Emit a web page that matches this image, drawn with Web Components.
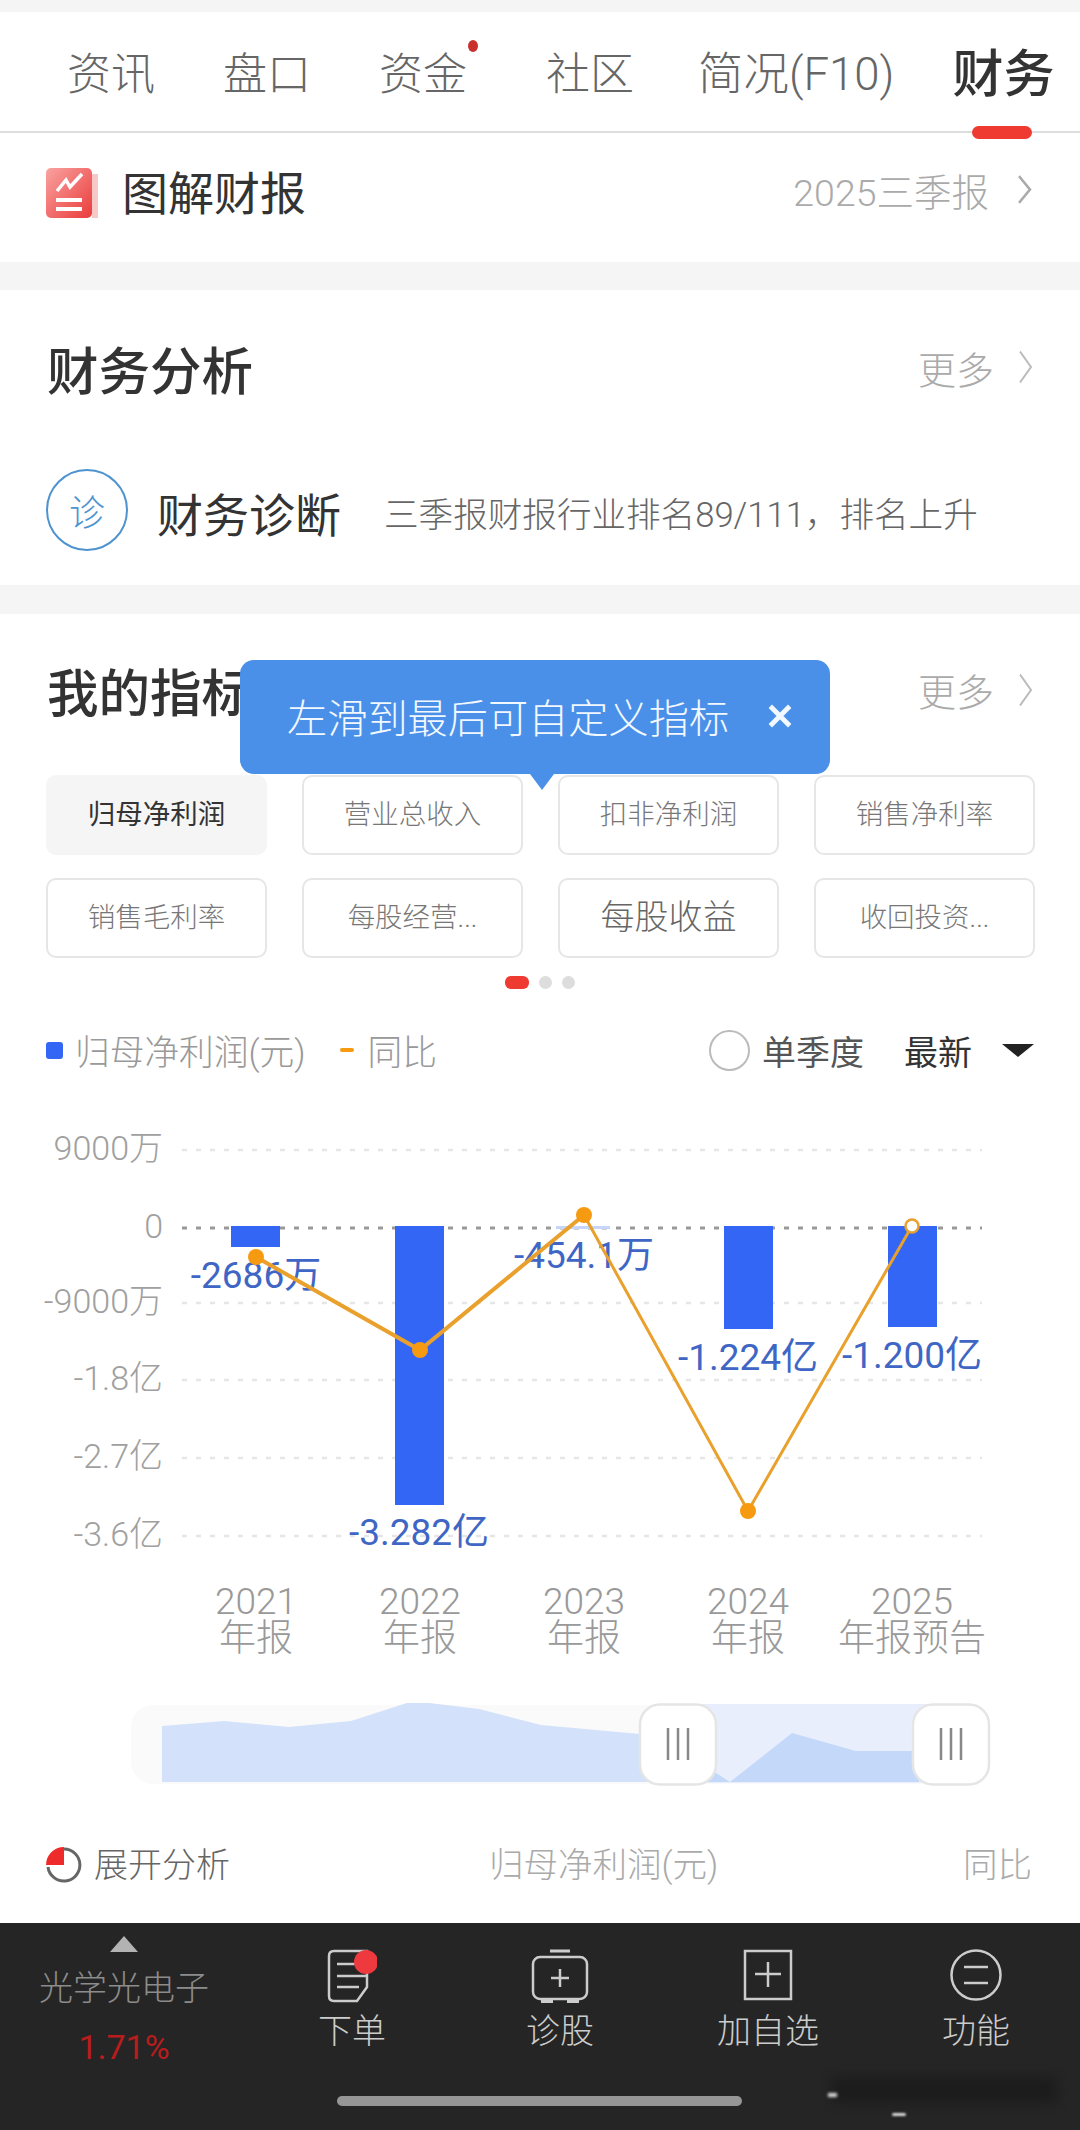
<!DOCTYPE html>
<html><head><meta charset="utf-8">
<style>
html,body{margin:0;padding:0;background:#f5f5f5;}
body{width:1080px;height:2130px;overflow:hidden;font-family:Roboto,"Noto Sans CJK SC",sans-serif;}
</style></head><body>
<stock-tabs></stock-tabs>
<report-row></report-row>
<analysis-card></analysis-card>
<metrics-card></metrics-card>
<dock-bar></dock-bar>
<script>
function def(name,html,after){
  customElements.define(name,class extends HTMLElement{
    constructor(){super();const r=this.attachShadow({mode:'open'});r.innerHTML=html;}
  });
}
const chev=(c,h=31,w=15,sw=2.4)=>`<svg width="${w}" height="${h}" viewBox="0 0 15 28" preserveAspectRatio="none" fill="none"><path d="M2 2 L13 14 L2 26" stroke="${c}" stroke-width="${sw}"/></svg>`;

def('tab-item',`<style>
:host{display:block;position:relative;font-size:44px;line-height:60px;color:#666;font-weight:300;white-space:nowrap}
:host([active]){font-size:51px;color:#333;font-weight:500}
:host([wide]){font-size:45.5px}
:host([dot])::after{content:"";position:absolute;right:-11px;top:-5px;width:10px;height:12px;border-radius:50%;background:#c9302c}
:host([active])::before{content:"";position:absolute;left:20px;top:81px;width:60px;height:13px;border-radius:7px;background:#ee3a30}
</style><slot></slot>`);

def('stock-tabs',`<style>
:host{display:flex;box-sizing:border-box;margin-top:12px;height:121px;padding:33px 0 0 67px;background:#fff;border-bottom:2px solid #ddd}
.a{margin-left:68px}.b{margin-left:68px}.c{margin-left:79px}.d{margin-left:64px}.e{margin-left:58px}
</style>
<tab-item>资讯</tab-item><tab-item class="a">盘口</tab-item><tab-item class="b" dot>资金</tab-item><tab-item class="c">社区</tab-item><tab-item class="d" wide>简况(F10)</tab-item><tab-item class="e" active>财务</tab-item>`);

def('report-row',`<style>
:host{display:flex;align-items:center;box-sizing:border-box;height:129px;padding:0 48px 16px 46px;background:#fff;margin-bottom:28px}
svg.i{margin-right:24px}
.t{font-size:46px;color:#333;font-weight:400;flex:1}
.r{font-size:37.5px;color:#aaa;font-weight:300;margin-right:28px}
</style>
<svg class="i" width="52" height="50" viewBox="0 0 52 50" style="margin-top:6px"><defs><linearGradient id="g" x1="0" y1="0" x2="1" y2="1"><stop offset="0" stop-color="#f9a3a0"/><stop offset="1" stop-color="#ea3b3b"/></linearGradient></defs><rect x="0" y="0" width="46" height="50" rx="5" fill="url(#g)"/><rect x="46" y="6" width="6" height="44" fill="#f6c9c6"/><path d="M11 23 L20 12 L24 19 L36 6" fill="none" stroke="#fff" stroke-width="3.5"/><path d="M10 32 H36 M10 41 H36" stroke="#fff" stroke-width="4"/></svg>
<span class="t">图解财报</span><span class="r">2025三季报</span>${chev('#aaa')}`);

def('analysis-card',`<style>
:host{display:block;box-sizing:border-box;height:295px;background:#fff;margin-bottom:29px;padding:0 47px}
.h{display:flex;align-items:center;height:160px;padding-bottom:6px;box-sizing:border-box}
.h b{flex:1;font-size:51.5px;font-weight:500;color:#333}
.h span{font-size:38px;color:#aaa;font-weight:300;margin-right:24px}
.d{display:flex;align-items:center;height:82px;margin-top:19px;margin-left:-1px}
.c{box-sizing:border-box;width:82px;height:82px;border:2.5px solid #4e93cf;border-radius:50%;color:#4e93cf;font-size:36px;font-weight:300;display:flex;align-items:center;justify-content:center;margin-right:29px}
.n{font-size:46px;color:#333;font-weight:400;margin-right:43px;position:relative;top:2px}
.s{font-size:34.6px;color:#666;font-weight:300;white-space:nowrap;position:relative;top:2px}
</style>
<div class="h"><b>财务分析</b><span>更多</span>${chev('#bbb',36,15,1.8)}</div>
<div class="d"><div class="c">诊</div><span class="n">财务诊断</span><span class="s">三季报财报行业排名89/111，排名上升</span></div>`);

def('metric-chip',`<style>
:host{display:flex;align-items:center;justify-content:center;box-sizing:border-box;height:80px;padding-bottom:7px;border:2.5px solid #e6e6e6;border-radius:10px;font-size:27.5px;color:#777;font-weight:300;white-space:nowrap}
:host([on]){background:#f5f5f5;border-color:#f5f5f5;color:#333;font-weight:400}
:host([big]){font-size:34px;color:#666}
</style><slot></slot>`);

def('tip-bubble',`<style>
:host{position:absolute;left:240px;top:46px;box-sizing:border-box;width:590px;height:114px;background:#4a90e8;border-radius:14px;display:flex;align-items:center;padding:0 0 4px 47px;color:#f2f8ff;font-size:40.2px;font-weight:300;white-space:nowrap}
:host::after{content:"";position:absolute;left:290px;top:114px;border:12px solid transparent;border-top:16px solid #4a90e8;border-bottom:0}
svg{margin-left:37px;margin-top:2px}
</style><span>左滑到最后可自定义指标</span><svg width="28" height="28" viewBox="0 0 26 26"><path d="M4 4 L22 22 M22 4 L4 22" stroke="#f2f8ff" stroke-width="4.5"/></svg>`);

const gy=[1150,1228,1303,1380,1458,1536], top0=1100;
const Y=v=>v-top0;
const bars=[[231,1226,49,21],[395,1226,49,279],[556,1226,54,3],[724,1226,49,103],[888,1226,49,101]];
const pts=[[256,1257],[420,1350],[584,1215],[748,1511],[912,1226]];
const lab=[[256,1288,'-2686万'],[419,1545,'-3.282亿'],[584,1268,'-454.1万'],[748,1370,'-1.224亿'],[912,1368,'-1.200亿']];
const yl=['9000万','0','-9000万','-1.8亿','-2.7亿','-3.6亿'];
const xl=['2021\n年报','2022\n年报','2023\n年报','2024\n年报','2025\n年报预告'];
let s=`<style>:host{display:block;margin-top:28px}svg{display:block}text{font-family:Roboto,"Noto Sans CJK SC",sans-serif}
.xl{font:300 37px/37px Roboto,"Noto Sans CJK SC",sans-serif;color:#999;text-align:center;white-space:pre-line}</style><svg width="1080" height="590" viewBox="0 0 1080 590">`;
gy.forEach((y,i)=>{
  s+=`<line x1="182" x2="982" y1="${Y(y)}" y2="${Y(y)}" stroke="${i==1?'#999':'#e6e6e6'}" stroke-width="${i==1?3:2.5}" stroke-dasharray="5 9"/>`;
  s+=`<text x="163" y="${Y(y)+10}" text-anchor="end" font-size="34" font-weight="300" fill="#a0a0a0">${yl[i]}</text>`;
});
bars.forEach((b,i)=>s+=`<rect x="${b[0]}" y="${Y(b[1])}" width="${b[2]}" height="${b[3]}" fill="${i==2?'#c6d6fb':'#3366f5'}"/>`);
lab.forEach(l=>s+=`<text x="${l[0]}" y="${Y(l[1])}" text-anchor="middle" font-size="37" font-weight="400" fill="#3f66c4">${l[2]}</text>`);
s+=`<polyline points="${pts.slice(0,3).map(p=>p[0]+','+Y(p[1])).join(' ')}" fill="none" stroke="#e9a02c" stroke-width="4"/>`;
s+=`<polyline points="${pts.slice(2).map(p=>p[0]+','+Y(p[1])).join(' ')}" fill="none" stroke="#e9a02c" stroke-width="3"/>`;
pts.forEach((p,i)=>s+= i<4?`<circle cx="${p[0]}" cy="${Y(p[1])}" r="8" fill="#f59a11"/>`:`<circle cx="${p[0]}" cy="${Y(p[1])}" r="6.5" fill="#fff" stroke="#e9a02c" stroke-width="2.5"/>`);
xl.forEach((t,i)=>{const x=pts[i][0];
 s+=`<foreignObject x="${x-100}" y="${Y(1583)}" width="200" height="80"><div xmlns="http://www.w3.org/1999/xhtml" class="xl">${t}</div></foreignObject>`;});
s+=`</svg>`;
def('fin-chart',s);

const hz=(x)=>Math.round(x/1.452), vz=(y)=>Math.round(y/3)-44;
const area=[[235,200],[325,187],[420,204],[510,187],[600,127],[695,150],[785,197],[930,225],[1035,335],[1060,368],[1150,222],[1243,275],[1335,275],[1335,368],[235,368]];
const ap=area.map(p=>hz(p[0])+','+vz(p[1])).join(' ');
const handle=(x)=>`<rect x="${x}" y="1.5" width="76" height="80" rx="20" fill="#fff" stroke="#e5e5e5" stroke-width="2.5"/><path d="M${x+28} 25 V57 M${x+38} 25 V57 M${x+48} 25 V57" stroke="#888" stroke-width="2.5"/>`;
def('mini-map',`<style>:host{display:block;height:84px;margin-top:13px}svg{display:block}</style>
<svg width="1080" height="84" viewBox="0 0 1080 84"><defs><clipPath id="l"><rect x="0" y="0" width="678" height="84"/></clipPath><clipPath id="r"><rect x="678" y="0" width="402" height="84"/></clipPath></defs>
<rect x="131" y="2" width="858" height="79" rx="22" fill="#fafafa"/>
<rect x="678" y="1" width="290" height="79" fill="#e8eefb"/>
<polygon points="${ap}" fill="#d3e2fa" clip-path="url(#l)"/><polygon points="${ap}" fill="#c4d8fa" clip-path="url(#r)"/>
${handle(640)}${handle(913)}</svg>`);

def('metrics-card',`<style>
:host{display:block;position:relative;box-sizing:border-box;height:1309px;background:#fff;padding-top:1px}
.h{display:flex;align-items:center;height:160px;padding:0 47px;box-sizing:border-box;padding-bottom:11px}
.h b{flex:1;font-size:51.5px;font-weight:500;color:#333}
.h span{font-size:38px;color:#aaa;font-weight:300;margin-right:24px}
.g{display:grid;grid-template-columns:repeat(4,221px);column-gap:35px;row-gap:23px;padding-left:46px}
.p{display:flex;justify-content:center;align-items:center;gap:10px;height:14px;margin-top:17px}
.p i{width:13px;height:13px;border-radius:50%;background:#ddd}
.p i:first-child{width:24px;border-radius:6px;background:#ee3a30}
.l{display:flex;align-items:center;height:44px;margin-top:39px;padding:0 46px;font-size:34.7px;color:#999;font-weight:300;white-space:nowrap}
.sq{width:17px;height:17px;border-radius:3px;background:#3366f5;margin-right:12px}
.da{width:14px;height:4px;border-radius:2px;background:#f59a11;margin:0 14px 0 34px}
.ra{box-sizing:border-box;width:41px;height:41px;border:2px solid #bbb;border-radius:50%;margin:0 12px 0 auto}
.q{color:#555;font-weight:400;font-size:34px}.n{color:#333;font-weight:400;margin:0 30px 0 40px;font-size:34px}
.tr{width:0;height:0;border:16px solid transparent;border-top:13px solid #222;border-bottom:0}
.b{display:flex;align-items:center;height:50px;padding:0 48px 0 46px;font-size:34.5px;color:#aaa;font-weight:300;margin-top:50px;white-space:nowrap}
.b svg{flex:none;margin-top:6px}
.b .x{color:#666;margin-left:12px;width:395px;font-size:34px}
.b .y{flex:1;font-size:34.5px}
</style>
<div class="h"><b>我的指标</b><span>更多</span>${chev('#bbb',36,15,1.8)}</div>
<tip-bubble></tip-bubble>
<div class="g"><metric-chip on>归母净利润</metric-chip><metric-chip>营业总收入</metric-chip><metric-chip>扣非净利润</metric-chip><metric-chip>销售净利率</metric-chip><metric-chip>销售毛利率</metric-chip><metric-chip>每股经营...</metric-chip><metric-chip big>每股收益</metric-chip><metric-chip>收回投资...</metric-chip></div>
<div class="p"><i></i><i></i><i></i></div>
<div class="l"><span class="sq"></span><span>归母净利润(元)</span><span class="da"></span><span>同比</span><span class="ra"></span><span class="q">单季度</span><span class="n">最新</span><span class="tr"></span></div>
<fin-chart></fin-chart>
<mini-map></mini-map>
<div class="b"><svg width="36" height="36" viewBox="0 0 36 36"><path d="M18 2 A16 16 0 1 1 2 20" fill="none" stroke="#666" stroke-width="3"/><path d="M18 18 V0 A18 18 0 0 0 0 18 Z" fill="#ee2a2a"/></svg><span class="x">展开分析</span><span class="y">归母净利润(元)</span><span>同比</span></div>`);

def('dock-item',`<style>
:host{display:flex;flex-direction:column;align-items:center;color:#ccc;font-size:34px;font-weight:300;line-height:44px}
.ic{height:61px;margin-top:26px;margin-bottom:-1px}
</style><div class="ic"><slot name="i"></slot></div><slot></slot>`);

def('dock-bar',`<style>
:host{display:block;position:relative;box-sizing:border-box;height:207px;background:#252525}
.g{display:grid;grid-template-columns:248px repeat(4,208px);height:173px}
.st{display:flex;flex-direction:column;align-items:center;color:#8c8c8c;font-size:34px;font-weight:300}
.st i{width:0;height:0;border:14px solid transparent;border-bottom:16px solid #b3b3b3;border-top:0;margin-top:13px}
.st span{margin-top:14px;line-height:44px}
.st b{font-weight:400;font-size:34px;color:#b81c1c;line-height:44px;margin-top:15px}
.bar{width:405px;height:10px;border-radius:5px;background:#969696;margin-left:337px}
.sm{position:absolute;left:832px;top:154px;width:225px;height:26px;background:#191919;filter:blur(6px);opacity:.75}
.m1{position:absolute;left:828px;top:170px;width:9px;height:4px;background:#ddd;filter:blur(1.5px)}
.m2{position:absolute;left:892px;top:190px;width:14px;height:3px;background:#ddd;filter:blur(1px);border-radius:2px}
svg{display:block}
</style>
<div class="g">
<div class="st"><i></i><span>光学光电子</span><b>1.71%</b></div>
<dock-item><svg slot="i" width="50" height="60" viewBox="0 0 50 60" fill="none" stroke="#ccc" stroke-width="2.5"><path d="M7 2 H40 V38 L30 52 H7 Q2 52 2 47 V7 Q2 2 7 2 Z M10 15 H34 M10 27 H39 M10 38 H32"/><circle cx="39" cy="13" r="12" fill="#ee3a3f" stroke="none"/></svg>下单</dock-item>
<dock-item><svg slot="i" width="58" height="60" viewBox="0 0 58 60" fill="none" stroke="#ccc" stroke-width="2.5"><path d="M19 2 H39" stroke-width="3"/><rect x="2" y="8" width="54" height="42" rx="7"/><path d="M29 20 V38 M20 29 H38"/><path d="M10 52 H22 M36 52 H48" stroke-width="4"/></svg>诊股</dock-item>
<dock-item><svg slot="i" width="50" height="60" viewBox="0 0 50 60" fill="none" stroke="#ccc" stroke-width="2.5"><rect x="2" y="2" width="46" height="48"/><path d="M25 13 V38 M12 25 H38"/></svg>加自选</dock-item>
<dock-item><svg slot="i" width="54" height="60" viewBox="0 0 54 60" fill="none" stroke="#ccc" stroke-width="2.5"><circle cx="27" cy="26" r="24.5"/><path d="M15 18 H39 M15 34 H39"/></svg>功能</dock-item>
</div>
<div class="bar"></div>
<div class="sm"></div><div class="m1"></div><div class="m2"></div>`);
</script>
</body></html>
